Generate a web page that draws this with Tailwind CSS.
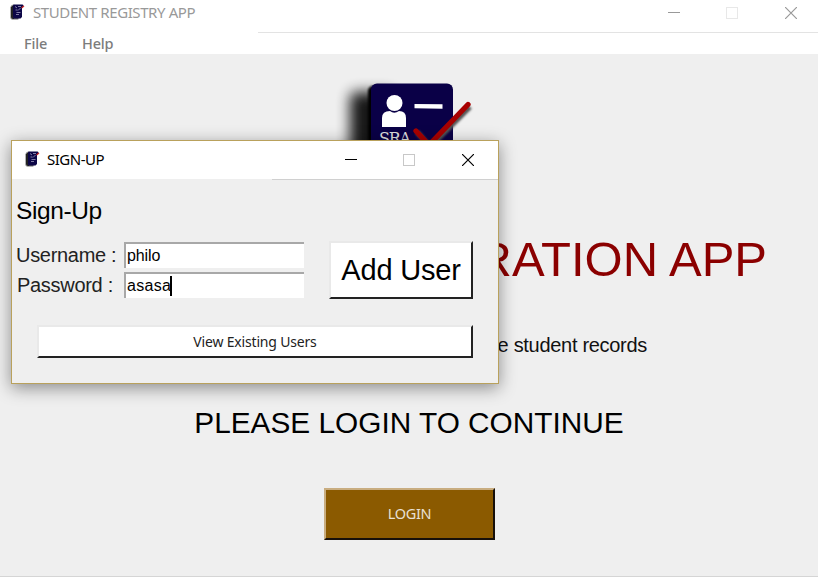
<!DOCTYPE html>
<html lang="en">
<head>
<meta charset="utf-8">
<title>Student Registry App</title>
<script src="https://cdn.jsdelivr.net/npm/@tailwindcss/browser@4"></script>
</head>
<body class="relative flex h-[577px] w-[818px] flex-col overflow-hidden bg-[#efefef] font-['Liberation_Sans',Arial,sans-serif] text-black">
<svg class="hidden">
  <symbol id="appicon" viewBox="0 0 16 18">
    <path d="M1.500 4.500Q2 2 5 1.500V15H10L9 16.500H4Q1.500 16.500 1.500 14Z" fill="#222" stroke="#bbb" stroke-width=".8"/>
    <path d="M5 1.500H13.500Q14.500 1.500 14.500 3L13 5V14L11.500 15.500H5Q4 15.500 4 14V3Q4 1.500 5 1.500Z" fill="#0c0647"/>
    <path d="M6 3.500L8 5M9 3.500h3M6.500 7h2M9 7.500l2.500-2.500M7.500 9.500h4M7 11.500h3" stroke="#8f8bb0" stroke-width=".9" fill="none"/>
    <path d="M12.500 5 L15 3" stroke="#c22" stroke-width="1.300"/>
  </symbol>
</svg>

<header class="flex h-8 shrink-0 items-start bg-white">
  <svg class="ml-[9px] mt-[3px] h-[18px] w-4"><use href="#appicon"/></svg>
  <h1 class="ml-2 mt-[1px] w-[600px] whitespace-nowrap font-['Noto_Sans',sans-serif] text-[15px] leading-[22px] tracking-[-0.4px] text-[#999]">STUDENT REGISTRY APP</h1>
  <div class="ml-[35px] mt-[7px] flex shrink-0 text-[#999]">
    <svg class="h-3 w-3" viewBox="0 0 12 12"><path d="M0 5.500h12" stroke="currentColor"/></svg>
    <svg class="ml-[46px] h-3 w-3" viewBox="0 0 12 12"><rect x=".5" y=".5" width="11" height="11" fill="none" stroke="#e8e8e8"/></svg>
    <svg class="ml-[47px] h-3 w-3" viewBox="0 0 12 12"><path d="M0 0l12 12M12 0L0 12" stroke="currentColor" stroke-width="1.200"/></svg>
  </div>
</header>
<nav class="flex h-[22px] shrink-0 bg-white font-['Noto_Sans',sans-serif] text-[14.5px] font-medium leading-[23px] tracking-[-0.2px] text-[#7c7c7c]">
  <span class="ml-6 w-[58px]">File</span><span class="w-[176px]">Help</span>
  <span class="h-px grow border-t border-[#e3e3e3]"></span>
</nav>

<main class="flex grow flex-col border-b border-[#d5d5d5]">
  <svg class="ml-[330px] h-[104px] w-[160px] shrink-0" viewBox="330 54 160 104">
    <defs>
      <filter id="soft" x="-60%" y="-60%" width="220%" height="220%"><feGaussianBlur stdDeviation="7"/></filter>
      <filter id="edge" x="-60%" y="-60%" width="220%" height="220%"><feGaussianBlur stdDeviation="1.300"/></filter>
    </defs>
    <rect x="350" y="92" width="44" height="80" rx="6" fill="#000" opacity=".9" filter="url(#soft)"/>
    <rect x="368" y="86" width="40" height="80" rx="5" fill="#000" filter="url(#edge)"/>
    <rect x="371" y="83.500" width="82" height="80" rx="6" fill="#0a0047"/>
    <circle cx="394.500" cy="103" r="8" fill="#fff"/>
    <path d="M382 127V118Q382 111 390 111Q394 114.500 399 111Q406 111 406 118V127Z" fill="#fff"/>
    <path d="M414.500 106.200L442.500 106.500" stroke="#fff" stroke-width="4.300"/>
    <text x="379" y="143.500" font-family="DejaVu Serif" font-size="16" textLength="32" fill="#ddd">SRA</text>
    <path d="M417 132L430 147L470 107" stroke="#555" stroke-width="5" fill="none" filter="url(#edge)"/>
    <path d="M416 131L429 145L468 104.500" stroke="#a80000" stroke-width="5.300" fill="none" stroke-linecap="round"/>
  </svg>
  <h2 class="mt-[71px] flex h-[60px] justify-end whitespace-nowrap pr-[51px] text-[49px] leading-[60px] text-[#8b0000]">RATION APP</h2>
  <p class="mt-[44px] flex h-[24px] justify-end whitespace-nowrap pr-[171px] text-[20px] leading-[24px] tracking-[-0.3px] text-[#111]">e student records</p>
  <p class="mt-[49px] h-[34px] whitespace-nowrap text-center text-[29.8px] leading-[34px]">PLEASE LOGIN TO CONTINUE</p>
  <button class="ml-[324px] mt-[48px] h-[52px] w-[171px] border-2 border-b-[#17100a] border-l-[#c9ad80] border-r-[#17100a] border-t-[#c9ad80] bg-[#8b5a00] font-['Noto_Sans',sans-serif] text-[14.5px] tracking-[-0.3px] text-[#e8e0d4]">LOGIN</button>
</main>

<section class="absolute left-[11px] top-[140px] flex h-[244px] w-[488px] flex-col border border-[#b9a15c] bg-[#efefef] shadow-[0_4px_16px_rgba(0,0,0,0.42)]">
  <header class="flex h-[38px] shrink-0 bg-white">
    <svg class="ml-3 mt-[9px] h-[18px] w-4"><use href="#appicon"/></svg>
    <h3 class="ml-[7px] mt-[7px] w-[298px] whitespace-nowrap font-['Noto_Sans',sans-serif] text-[15px] leading-[22px] tracking-[-0.5px]">SIGN-UP</h3>
    <div class="mt-[13px] flex">
      <svg class="h-3 w-3" viewBox="0 0 12 12"><path d="M0 5.500h12" stroke="#000"/></svg>
      <svg class="ml-[46px] h-3 w-3" viewBox="0 0 12 12"><rect x=".5" y=".5" width="11" height="11" fill="none" stroke="#c8c8c8"/></svg>
      <svg class="ml-[47px] h-3 w-3" viewBox="0 0 12 12"><path d="M0 0l12 12M12 0L0 12" stroke="#000" stroke-width="1.200"/></svg>
    </div>
  </header>
  <div class="ml-[260px] h-px shrink-0 bg-[#d0d0d0]"></div>
  <h4 class="ml-1 mt-4 h-[30px] text-[24.500px] leading-[30px] tracking-[-0.4px]">Sign-Up</h4>
  <div class="mt-4 flex">
    <div class="flex w-[317px] flex-col gap-1 text-[20px] tracking-[-0.3px] text-[#222]">
      <div class="flex h-[26px] items-center"><span class="w-[112px] whitespace-nowrap pl-1">Username :</span><span class="flex h-[26px] w-[180px] items-center border-l-2 border-t-2 border-[#a8a8a8] bg-white pl-px text-[16px] tracking-[-0.1px] text-black">philo</span></div>
      <div class="flex h-[26px] items-center"><span class="w-[112px] whitespace-nowrap pl-[5px]">Password :</span><span class="flex h-[26px] w-[180px] items-center border-l-2 border-t-2 border-[#a8a8a8] bg-white pl-px text-[16px] tracking-[0.3px] text-black">asasa<i class="-ml-px h-5 w-[2px] bg-black"></i></span></div>
    </div>
    <button class="-mt-px h-[58px] w-[144px] whitespace-nowrap border-2 border-b-[#222] border-l-[#e9e9e9] border-r-[#222] border-t-[#e9e9e9] bg-white pt-[2px] text-[29px] tracking-[-0.2px]">Add User</button>
  </div>
  <button class="ml-[25px] mt-[26px] h-[33px] w-[436px] border-2 border-b-[#222] border-l-[#e9e9e9] border-r-[#222] border-t-[#e9e9e9] bg-white font-['Noto_Sans',sans-serif] text-[14px] leading-none tracking-[-0.18px] text-[#222]">View Existing Users</button>
</section>
</body>
</html>
